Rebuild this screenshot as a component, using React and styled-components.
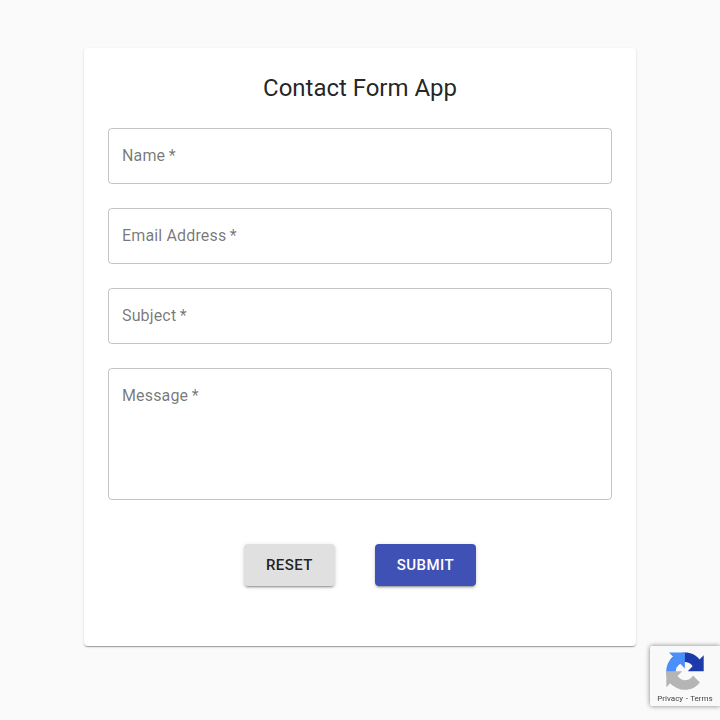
import React from 'react';
import styled, { createGlobalStyle } from 'styled-components';

const GlobalStyle = createGlobalStyle`
  *, *::before, *::after { box-sizing: border-box; }
  body {
    margin: 0;
    background: #fafafa;
    color: rgba(0, 0, 0, 0.87);
    font-family: Roboto, "Liberation Sans", sans-serif;
    overflow: hidden;
  }
`;

const Page = styled.main`
  display: flex;
  justify-content: center;
  align-items: flex-start;
  height: 720px;
  padding-top: 48px;
`;

const Card = styled.form`
  display: flex;
  flex-direction: column;
  width: 552px;
  height: 598px;
  padding: 24px;
  background: #fff;
  border-radius: 4px;
  box-shadow: 0 2px 1px -1px rgba(0, 0, 0, 0.2), 0 1px 1px 0 rgba(0, 0, 0, 0.14),
    0 1px 3px 0 rgba(0, 0, 0, 0.12);
`;

const Title = styled.h1`
  margin: 0 0 24px;
  font-size: 24px;
  font-weight: 400;
  line-height: 32px;
  letter-spacing: -0.03px;
  text-align: center;
`;

const Fields = styled.div`
  display: flex;
  flex-direction: column;
  gap: 24px;
`;

const Field = styled.label`
  display: block;
  height: ${({ $tall }) => ($tall ? 132 : 56)}px;
  padding: 17px 13px;
  border: 1px solid rgba(0, 0, 0, 0.23);
  border-radius: 4px;
  color: rgba(0, 0, 0, 0.54);
  font-size: 16px;
  line-height: 19px;
  letter-spacing: 0.15px;
`;

const Required = styled.span`
  margin-left: -0.6px;
`;

const Actions = styled.div`
  display: flex;
  justify-content: center;
  gap: 40px;
  margin-top: 44px;
`;

const Button = styled.button`
  height: 42px;
  padding: 0 22px;
  border: 0;
  border-radius: 4px;
  background: ${({ $primary }) => ($primary ? '#3f51b5' : '#e0e0e0')};
  color: ${({ $primary }) => ($primary ? '#fff' : 'rgba(0, 0, 0, 0.87)')};
  font-family: inherit;
  font-size: 15px;
  font-weight: 500;
  line-height: 26px;
  letter-spacing: 0.43px;
  text-transform: uppercase;
  box-shadow: 0 3px 1px -2px rgba(0, 0, 0, 0.2), 0 2px 2px 0 rgba(0, 0, 0, 0.14),
    0 1px 5px 0 rgba(0, 0, 0, 0.12);
`;

const Badge = styled.aside`
  position: fixed;
  left: 650px;
  top: 646px;
  display: flex;
  flex-direction: column;
  align-items: center;
  width: 70px;
  height: 60px;
  padding-top: 6px;
  background: #f9f9f9;
  border-radius: 2px 0 0 2px;
  box-shadow: 0 0 5px gray;
`;

const Logo = styled.svg`
  display: block;
  flex: none;
  width: 38px;
  height: 38px;
`;

const Legal = styled.div`
  margin-top: 4px;
  font-size: 8px;
  line-height: 10px;
  word-spacing: 0.5px;
  white-space: nowrap;
  color: #444;
`;

const fields = ['Name', 'Email Address', 'Subject', 'Message'];

export default function App() {
  return (
    <>
      <GlobalStyle />
      <Page>
        <Card>
          <Title>Contact Form App</Title>
          <Fields>
            {fields.map((name) => (
              <Field key={name} $tall={name === 'Message'}>
                {name} <Required>*</Required>
              </Field>
            ))}
          </Fields>
          <Actions>
            <Button type="reset">Reset</Button>
            <Button type="button" $primary>Submit</Button>
          </Actions>
        </Card>
      </Page>
      <Badge>
        <Logo viewBox="-0.5 -0.8 65 65">
          <path fill="#1c3aa9" d="M64 31.955l-.033-1.37V4.687l-7.16 7.16C50.948 4.674 42.033.093 32.05.093c-10.4 0-19.622 4.96-25.458 12.64l11.736 11.86a15.55 15.55 0 0 1 4.754-5.334c2.05-1.6 4.952-2.906 8.968-2.906.485 0 .86.057 1.135.163 4.976.393 9.288 3.14 11.828 7.124l-8.307 8.307L64 31.953" />
          <path fill="#4a8ffa" d="M31.862.094l-1.37.033H4.594l7.16 7.16C4.58 13.147 0 22.06 0 32.046c0 10.4 4.96 19.622 12.64 25.458L24.5 45.768a15.55 15.55 0 0 1-5.334-4.754c-1.6-2.05-2.906-4.952-2.906-8.968 0-.485.057-.86.163-1.135.393-4.976 3.14-9.288 7.124-11.828l8.307 8.307L31.86.095" />
          <path fill="#b5b5b5" d="M.001 32.045l.033 1.37v25.898l7.16-7.16c5.86 7.173 14.774 11.754 24.76 11.754 10.4 0 19.622-4.96 25.458-12.64l-11.736-11.86a15.55 15.55 0 0 1-4.754 5.334c-2.05 1.6-4.952 2.906-8.968 2.906-.485 0-.86-.057-1.135-.163-4.976-.393-9.288-3.14-11.828-7.124l8.307-8.307c-10.522.04-22.4.066-27.295-.005" />
        </Logo>
        <Legal>Privacy - Terms</Legal>
      </Badge>
    </>
  );
}
